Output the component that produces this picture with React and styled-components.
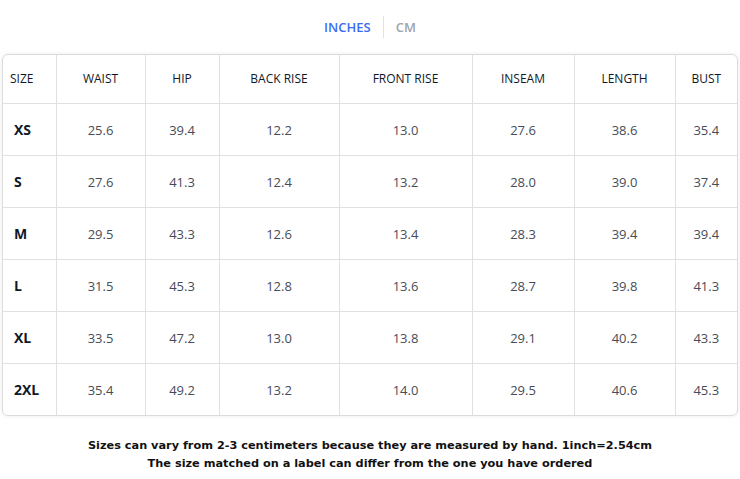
import React, { useState } from 'react'
import styled, { createGlobalStyle } from 'styled-components'

const GlobalStyle = createGlobalStyle`
    body {
        margin: 0;
        background: #fff;
        font-family: "Open Sans", "Noto Sans", sans-serif;
    }
`

const Page = styled.div`
    width: 740px;
    display: flex;
    flex-direction: column;
    align-items: center;
`

const Toggle = styled.div`
    display: flex;
    align-items: center;
    height: 54px;
`

const Unit = styled.button`
    border: none;
    background: none;
    padding: 0 12px;
    font-family: "Open Sans", sans-serif;
    font-size: 13px;
    font-weight: 600;
    color: ${p => (p.active ? '#3a6cf4' : '#a0a4ad')};
    cursor: pointer;
`

const Divider = styled.span`
    width: 1px;
    height: 22px;
    background: #e3e3e3;
`

const TableWrap = styled.div`
    width: 734px;
    border: 1px solid #dcdcdc;
    border-radius: 6px;
    box-shadow: 0 0 4px rgba(0, 0, 0, 0.08);
    overflow: hidden;
`

const Table = styled.table`
    width: 100%;
    border-collapse: collapse;
    table-layout: fixed;
`

const Th = styled.th`
    height: 46px;
    padding: 0 0 2px;
    font-size: 12px;
    font-weight: 500;
    color: #101828;
    text-align: center;
    border-left: 1px solid #e0e0e0;
    &:first-child {
        border-left: none;
        text-align: left;
        padding-left: 7px;
    }
`

const Td = styled.td`
    height: 51px;
    padding: 0;
    font-size: 13px;
    color: #474c57;
    text-align: center;
    border-left: 1px solid #e0e0e0;
    border-top: 1px solid #e0e0e0;
    &:first-child {
        border-left: none;
        text-align: left;
        padding-left: 11px;
        font-weight: 700;
        font-size: 14px;
        color: #111827;
    }
`

const Note = styled.p`
    margin: 21px 0 0;
    text-align: center;
    font-family: "DejaVu Sans", Verdana, sans-serif;
    font-weight: 700;
    font-size: 11.3px;
    line-height: 18px;
    color: #111;
`

const widths = [53, 89, 74, 120, 133, 102, 101, 62]
const headers = ['SIZE', 'WAIST', 'HIP', 'BACK RISE', 'FRONT RISE', 'INSEAM', 'LENGTH', 'BUST']
const rows = [
    ['XS', 25.6, 39.4, 12.2, 13.0, 27.6, 38.6, 35.4],
    ['S', 27.6, 41.3, 12.4, 13.2, 28.0, 39.0, 37.4],
    ['M', 29.5, 43.3, 12.6, 13.4, 28.3, 39.4, 39.4],
    ['L', 31.5, 45.3, 12.8, 13.6, 28.7, 39.8, 41.3],
    ['XL', 33.5, 47.2, 13.0, 13.8, 29.1, 40.2, 43.3],
    ['2XL', 35.4, 49.2, 13.2, 14.0, 29.5, 40.6, 45.3],
]

export default function App() {
    const [unit, setUnit] = useState('in')
    const factor = unit === 'in' ? 1 : 2.54
    return (
        <Page>
            <GlobalStyle />
            <Toggle>
                <Unit active={unit === 'in'} onClick={() => setUnit('in')}>INCHES</Unit>
                <Divider />
                <Unit active={unit === 'cm'} onClick={() => setUnit('cm')}>CM</Unit>
            </Toggle>
            <TableWrap>
                <Table>
                    <colgroup>
                        {widths.map((w, i) => <col key={i} style={{ width: w }} />)}
                    </colgroup>
                    <thead>
                        <tr>
                            {headers.map(h => <Th key={h}>{h}</Th>)}
                        </tr>
                    </thead>
                    <tbody>
                        {rows.map(r => (
                            <tr key={r[0]}>
                                {r.map((v, i) => (
                                    <Td key={i}>{i === 0 ? v : (v * factor).toFixed(1)}</Td>
                                ))}
                            </tr>
                        ))}
                    </tbody>
                </Table>
            </TableWrap>
            <Note>
                Sizes can vary from 2-3 centimeters because they are measured by hand. 1inch=2.54cm<br />
                The size matched on a label can differ from the one you have ordered
            </Note>
        </Page>
    )
}
